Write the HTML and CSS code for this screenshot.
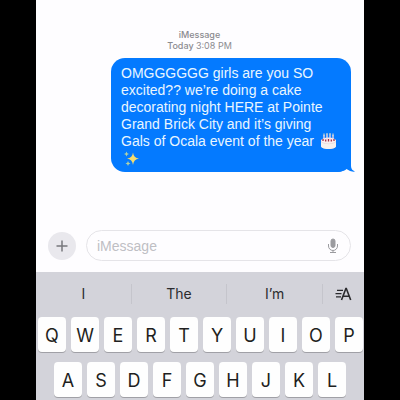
FILE: index.html
```html
<!DOCTYPE html>
<html lang="en">
<head>
<meta charset="utf-8">
<meta name="viewport" content="width=device-width, initial-scale=1">
<title>iMessage</title>
<link rel="stylesheet" href="styles.css">
</head>
<body>
<main class="phone">
  <section class="thread">
    <header class="stamp">
      <div>iMessage</div>
      <div>Today <time>3:08 PM</time></div>
    </header>
    <p class="bubble">OMGGGGGG girls are you SO<br>excited?? we’re doing a cake<br>decorating night HERE at Pointe<br>Grand Brick City and it’s giving<br>Gals of Ocala event of the year
      <svg class="emoji" viewBox="0 0 17 17" role="img" aria-label="birthday cake">
        <path d="M1 7v6c0 4 15 4 15 0V7z" fill="#e3dddf"/>
        <path d="M1 9v4c0 4 15 4 15 0V9c-3 3-12 3-15 0z" fill="#f7f1ee"/>
        <ellipse cx="8.500" cy="7.500" rx="7.500" ry="3" fill="#fbeeee"/>
        <path d="M4 2v5.500M7 1.500V7M10 1.500V7M13 2v5.500" stroke="#f7dfe6" stroke-width="1.300"/>
        <path d="M3 6v2M5.700 6.500v2M8.500 6v2.500M11.300 6.500v2M14 6v2" stroke="#a32f45" stroke-width="1.300"/>
        <path d="M4 .5v2M7 0v2M10 0v2M13 .5v2" stroke="#ffe9c4"/>
      </svg><br><svg class="emoji" viewBox="0 0 17 17" role="img" aria-label="sparkles">
        <path d="M10 2.500q.6 5.400 6 6-5.400.6-6 6.500-.6-5.900-6-6.500 5.400-.6 6-6z" fill="#f3dc70"/>
        <path d="M3.500 1.500q.3 2.200 2.500 2.500-2.200.3-2.500 2.500Q3.200 4.300 1 4q2.200-.3 2.500-2.500zM5 11q.3 2.200 2.500 2.500-2.200.3-2.500 2.500-.3-2.200-2.500-2.500Q4.700 13.200 5 11z" fill="#b4d2a4"/>
      </svg>
      <svg class="tail" viewBox="0 0 18 16" aria-hidden="true"><path d="M0 0h14v9q0 4 4 5.500-4 .8-8.500-2.500Q7 14.500 0 15z" fill="#047aff"/></svg>
    </p>
    <form class="compose">
      <button class="add" type="button" aria-label="Add attachment">
        <svg viewBox="0 0 12 12"><path d="M6 .5v11M.5 6h11" stroke="#77777c" stroke-width="1.500"/></svg>
      </button>
      <div class="field">
        <input type="text" placeholder="iMessage" aria-label="Message">
        <button class="mic" type="button" aria-label="Dictate">
          <svg viewBox="0 0 12 16" fill="none" stroke="#9b9b9f">
            <rect x="4" y="1" width="4" height="8.500" rx="2" fill="#9b9b9f"/>
            <path d="M1.500 6v2a4.500 4.500 0 0 0 9 0V6M6 12.500v2M3 14.500h6"/>
          </svg>
        </button>
      </div>
    </form>
  </section>
  <section class="keyboard" aria-label="Keyboard">
    <div class="suggestions">
      <button type="button">I</button>
      <button type="button">The</button>
      <button type="button">I’m</button>
      <button class="format" type="button" aria-label="Text effects">
        <svg viewBox="0 0 18 14" fill="none" stroke="#2b2b2e"><path d="M7.500 13 11.900 1.500h.4L16.700 13M9 9.300h6.200" stroke-width="1.600"/><path d="M3 3.300h6M1.500 6.600h6M2 9.900h5" stroke-width="1.200"/></svg>
      </button>
    </div>
    <div class="keys">
      <button type="button">Q</button><button type="button">W</button><button type="button">E</button><button type="button">R</button><button type="button">T</button><button type="button">Y</button><button type="button">U</button><button type="button">I</button><button type="button">O</button><button type="button">P</button>
    </div>
    <div class="keys home">
      <button type="button">A</button><button type="button">S</button><button type="button">D</button><button type="button">F</button><button type="button">G</button><button type="button">H</button><button type="button">J</button><button type="button">K</button><button type="button">L</button>
    </div>
  </section>
</main>
</body>
</html>
```
FILE: styles.css
```css
* { box-sizing: border-box; }

body {
  margin: 0;
  padding: 0 9%;
  background: #000;
  font-family: Inter, "Liberation Sans", sans-serif;
}

button, input {
  margin: 0;
  padding: 0;
  border: 0;
  background: none;
  font: inherit;
  color: inherit;
}

.phone {
  display: flex;
  flex-direction: column;
  min-height: 100vh;
  background: #fefdff;
}

.thread {
  flex: 1;
  display: flex;
  flex-direction: column;
  padding: 29px 13px 11px 12px;
}

.stamp {
  margin-bottom: 7px;
  text-align: center;
  font-size: 9px;
  font-weight: 500;
  line-height: 11px;
  color: #8b8b90;
}

.stamp time { font-weight: 400; }

.bubble {
  position: relative;
  align-self: flex-end;
  width: 240px;
  margin: 0;
  padding: 7px 10px 5px;
  border-radius: 14px;
  background: #047aff;
  color: #e9f6ff;
  font-family: "Liberation Sans", Arial, sans-serif;
  font-size: 14px;
  line-height: 17px;
  white-space: nowrap;
}

.emoji {
  width: 17px;
  height: 17px;
  margin: 0 2px;
  vertical-align: top;
}

.tail {
  position: absolute;
  right: -4px;
  bottom: -1px;
  width: 18px;
  height: 16px;
}

.compose {
  display: flex;
  align-items: center;
  gap: 10px;
  margin-top: auto;
}

.add {
  display: grid;
  place-items: center;
  width: 28px;
  height: 28px;
  border-radius: 50%;
  background: #e9e8ed;
}

.add svg { width: 12px; height: 12px; }

.field {
  flex: 1;
  display: flex;
  align-items: center;
  height: 31px;
  padding: 0 11px 0 10px;
  border: 1px solid #e5e4e8;
  border-radius: 16px;
}

.field input {
  flex: 1;
  min-width: 0;
  font-family: "Liberation Sans", Arial, sans-serif;
  font-size: 14px;
  outline: 0;
}

.field input::placeholder { color: #bfbfc4; opacity: 1; }

.mic svg {
  display: block;
  width: 12px;
  height: 16px;
}

.keyboard {
  padding-bottom: 3px;
  background: #d3d3da;
}

.suggestions {
  display: grid;
  grid-template-columns: 1fr 1fr 1fr 41px;
  align-items: center;
  height: 45px;
  padding-bottom: 2px;
  color: #2b2b2e;
  font-size: 14px;
}

.suggestions button {
  height: 20px;
  border-right: 1px solid #c5c5cc;
}

.suggestions .format {
  display: grid;
  place-items: center;
  border-right: 0;
}

.format svg { width: 18px; height: 14px; }

.keys {
  display: grid;
  grid-template-columns: repeat(10, 1fr);
  gap: 5px;
  padding: 0 1px 0 2px;
}

.keys button {
  height: 35px;
  padding-top: 2px;
  border-radius: 4px;
  background: #fefefe;
  box-shadow: 0 1px 0 #a0a0a6;
  color: #1f1f21;
  font-size: 18px;
}

.home {
  grid-template-columns: repeat(9, 1fr);
  margin-top: 10px;
  padding: 0 18px;
}
```
